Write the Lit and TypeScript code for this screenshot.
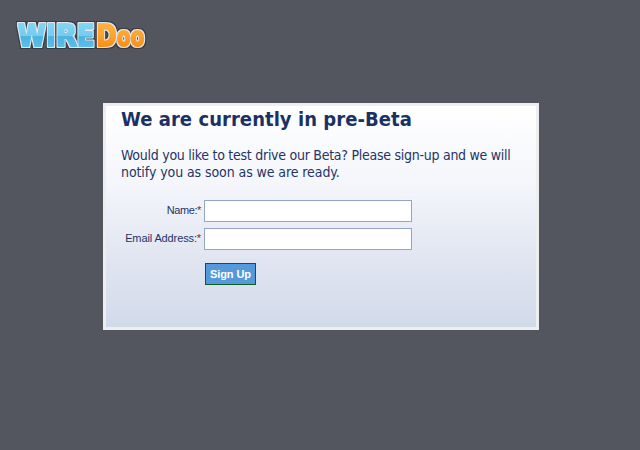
import { LitElement, html, css, svg } from "lit";
import { customElement, state } from "lit/decorators.js";

interface Glyph { ch: string; x: number; w: number; size: number; fill: string; }

const GLYPHS: Glyph[] = [
  { ch: "W", x: 18, w: 27.5, size: 30, fill: "url(#blue)" },
  { ch: "I", x: 46.5, w: 9, size: 30, fill: "url(#blue)" },
  { ch: "R", x: 56, w: 21, size: 30, fill: "url(#blue)" },
  { ch: "E", x: 77, w: 17.5, size: 30, fill: "url(#blue)" },
  { ch: "D", x: 96.5, w: 20, size: 30, fill: "url(#orange)" },
  { ch: "o", x: 117, w: 13.5, size: 27, fill: "url(#orange)" },
  { ch: "o", x: 130.7, w: 13.5, size: 27, fill: "url(#orange)" },
];

@customElement("wiredoo-logo")
export class WiredooLogo extends LitElement {
  static styles = css`
    :host { display: block; width: 160px; height: 60px; }
    svg { display: block; }
    text { font-family: "DejaVu Sans", sans-serif; font-weight: 700; stroke-linejoin: round; stroke-width: 2.2px; }
  `;

  render() {
    return html`<svg width="160" height="60" viewBox="0 0 160 60" role="img" aria-label="WIREDoo">
      <defs>
        <linearGradient id="blue" gradientUnits="userSpaceOnUse" x1="0" y1="22" x2="0" y2="49">
          <stop offset="0" stop-color="#84d6f4" /><stop offset=".52" stop-color="#73cbee" />
          <stop offset=".54" stop-color="#4bb2e0" /><stop offset="1" stop-color="#5fc0ea" />
        </linearGradient>
        <linearGradient id="orange" gradientUnits="userSpaceOnUse" x1="0" y1="22" x2="0" y2="49">
          <stop offset="0" stop-color="#ffb545" /><stop offset=".5" stop-color="#fda32e" />
          <stop offset="1" stop-color="#f98a10" />
        </linearGradient>
        <filter id="outline" filterUnits="userSpaceOnUse" x="0" y="0" width="160" height="60" color-interpolation-filters="sRGB">
          <feMorphology in="SourceAlpha" operator="dilate" radius="2" result="wide" />
          <feGaussianBlur in="wide" stdDeviation=".3" result="wideSoft" />
          <feFlood flood-color="#363b46" />
          <feComposite in2="wideSoft" operator="in" result="edge" />
          <feMorphology in="SourceAlpha" operator="dilate" radius="1" result="near" />
          <feGaussianBlur in="near" stdDeviation=".3" result="soft" />
          <feFlood flood-color="#e3eaee" />
          <feComposite in2="soft" operator="in" result="rim" />
          <feMerge><feMergeNode in="edge" /><feMergeNode in="rim" /><feMergeNode in="SourceGraphic" /></feMerge>
        </filter>
      </defs>
      <text y="46" filter="url(#outline)">${GLYPHS.map((g) => svg`<tspan x=${g.x} font-size=${g.size}
        textLength=${g.w} lengthAdjust="spacingAndGlyphs" fill=${g.fill} stroke=${g.fill}>${g.ch}</tspan>`)}</text>
    </svg>`;
  }
}

@customElement("app-root")
export class AppRoot extends LitElement {
  @state() private fields = [
    { id: "name", label: "Name:", type: "text" },
    { id: "email", label: "Email Address:", type: "email" },
  ];

  static styles = css`
    :host { display: flex; flex-direction: column; height: 450px; background: #53565e; color: #1f3467; overflow: hidden; }
    .panel {
      box-sizing: border-box; width: 436px; height: 227px; margin: 43px 0 0 103px; padding: 0 15px;
      border: 3px solid #eeeeee; background: linear-gradient(#ffffff 0%, #f4f6fb 35%, #dfe4f0 72%, #d2daea 100%);
      background-clip: padding-box;
    }
    h1, p { font-family: "DejaVu Sans Condensed", "DejaVu Sans", sans-serif; font-stretch: condensed; margin: 0; white-space: nowrap; }
    h1 { font-size: 20px; line-height: 24px; margin-top: 1px; color: #1b3164; letter-spacing: .05px; }
    p { font-size: 14px; line-height: 17px; margin-top: 16px; }
    .first { letter-spacing: -.265px; }
    .second { letter-spacing: -.085px; }
    form { display: grid; grid-template-columns: 80px 208px; column-gap: 3px; row-gap: 6px; margin-top: 19px; font: 11px "Liberation Sans", Arial, sans-serif; }
    label { text-align: right; line-height: 21px; white-space: nowrap; letter-spacing: -.12px; }
    .name { letter-spacing: -.4px; }
    .req { color: #6b2a3c; }
    input { box-sizing: border-box; width: 208px; height: 22px; margin: 0; border: 1px solid #94a3c8; border-radius: 0; background: #fff; }
    button {
      grid-column: 2; box-sizing: border-box; width: 51px; height: 22px; margin: 7px 0 0 1px; padding: 0;
      border: 1px solid #0b5c1d; border-radius: 0; background: #5599dd; color: #fff;
      font: bold 11px "Liberation Sans", Arial, sans-serif; letter-spacing: -.1px;
    }
  `;

  render() {
    return html`
      <wiredoo-logo></wiredoo-logo>
      <main class="panel">
        <h1>We are currently in pre-Beta</h1>
        <p><span class="first">Would you like to test drive our Beta? Please sign-up and we will</span><br /><span class="second">notify you as soon as we are ready.</span></p>
        <form>
          ${this.fields.map((f) => html`
            <label class=${f.id} for=${f.id}>${f.label}<span class="req">*</span></label>
            <input id=${f.id} type=${f.type} />`)}
          <button type="button">Sign Up</button>
        </form>
      </main>`;
  }
}
